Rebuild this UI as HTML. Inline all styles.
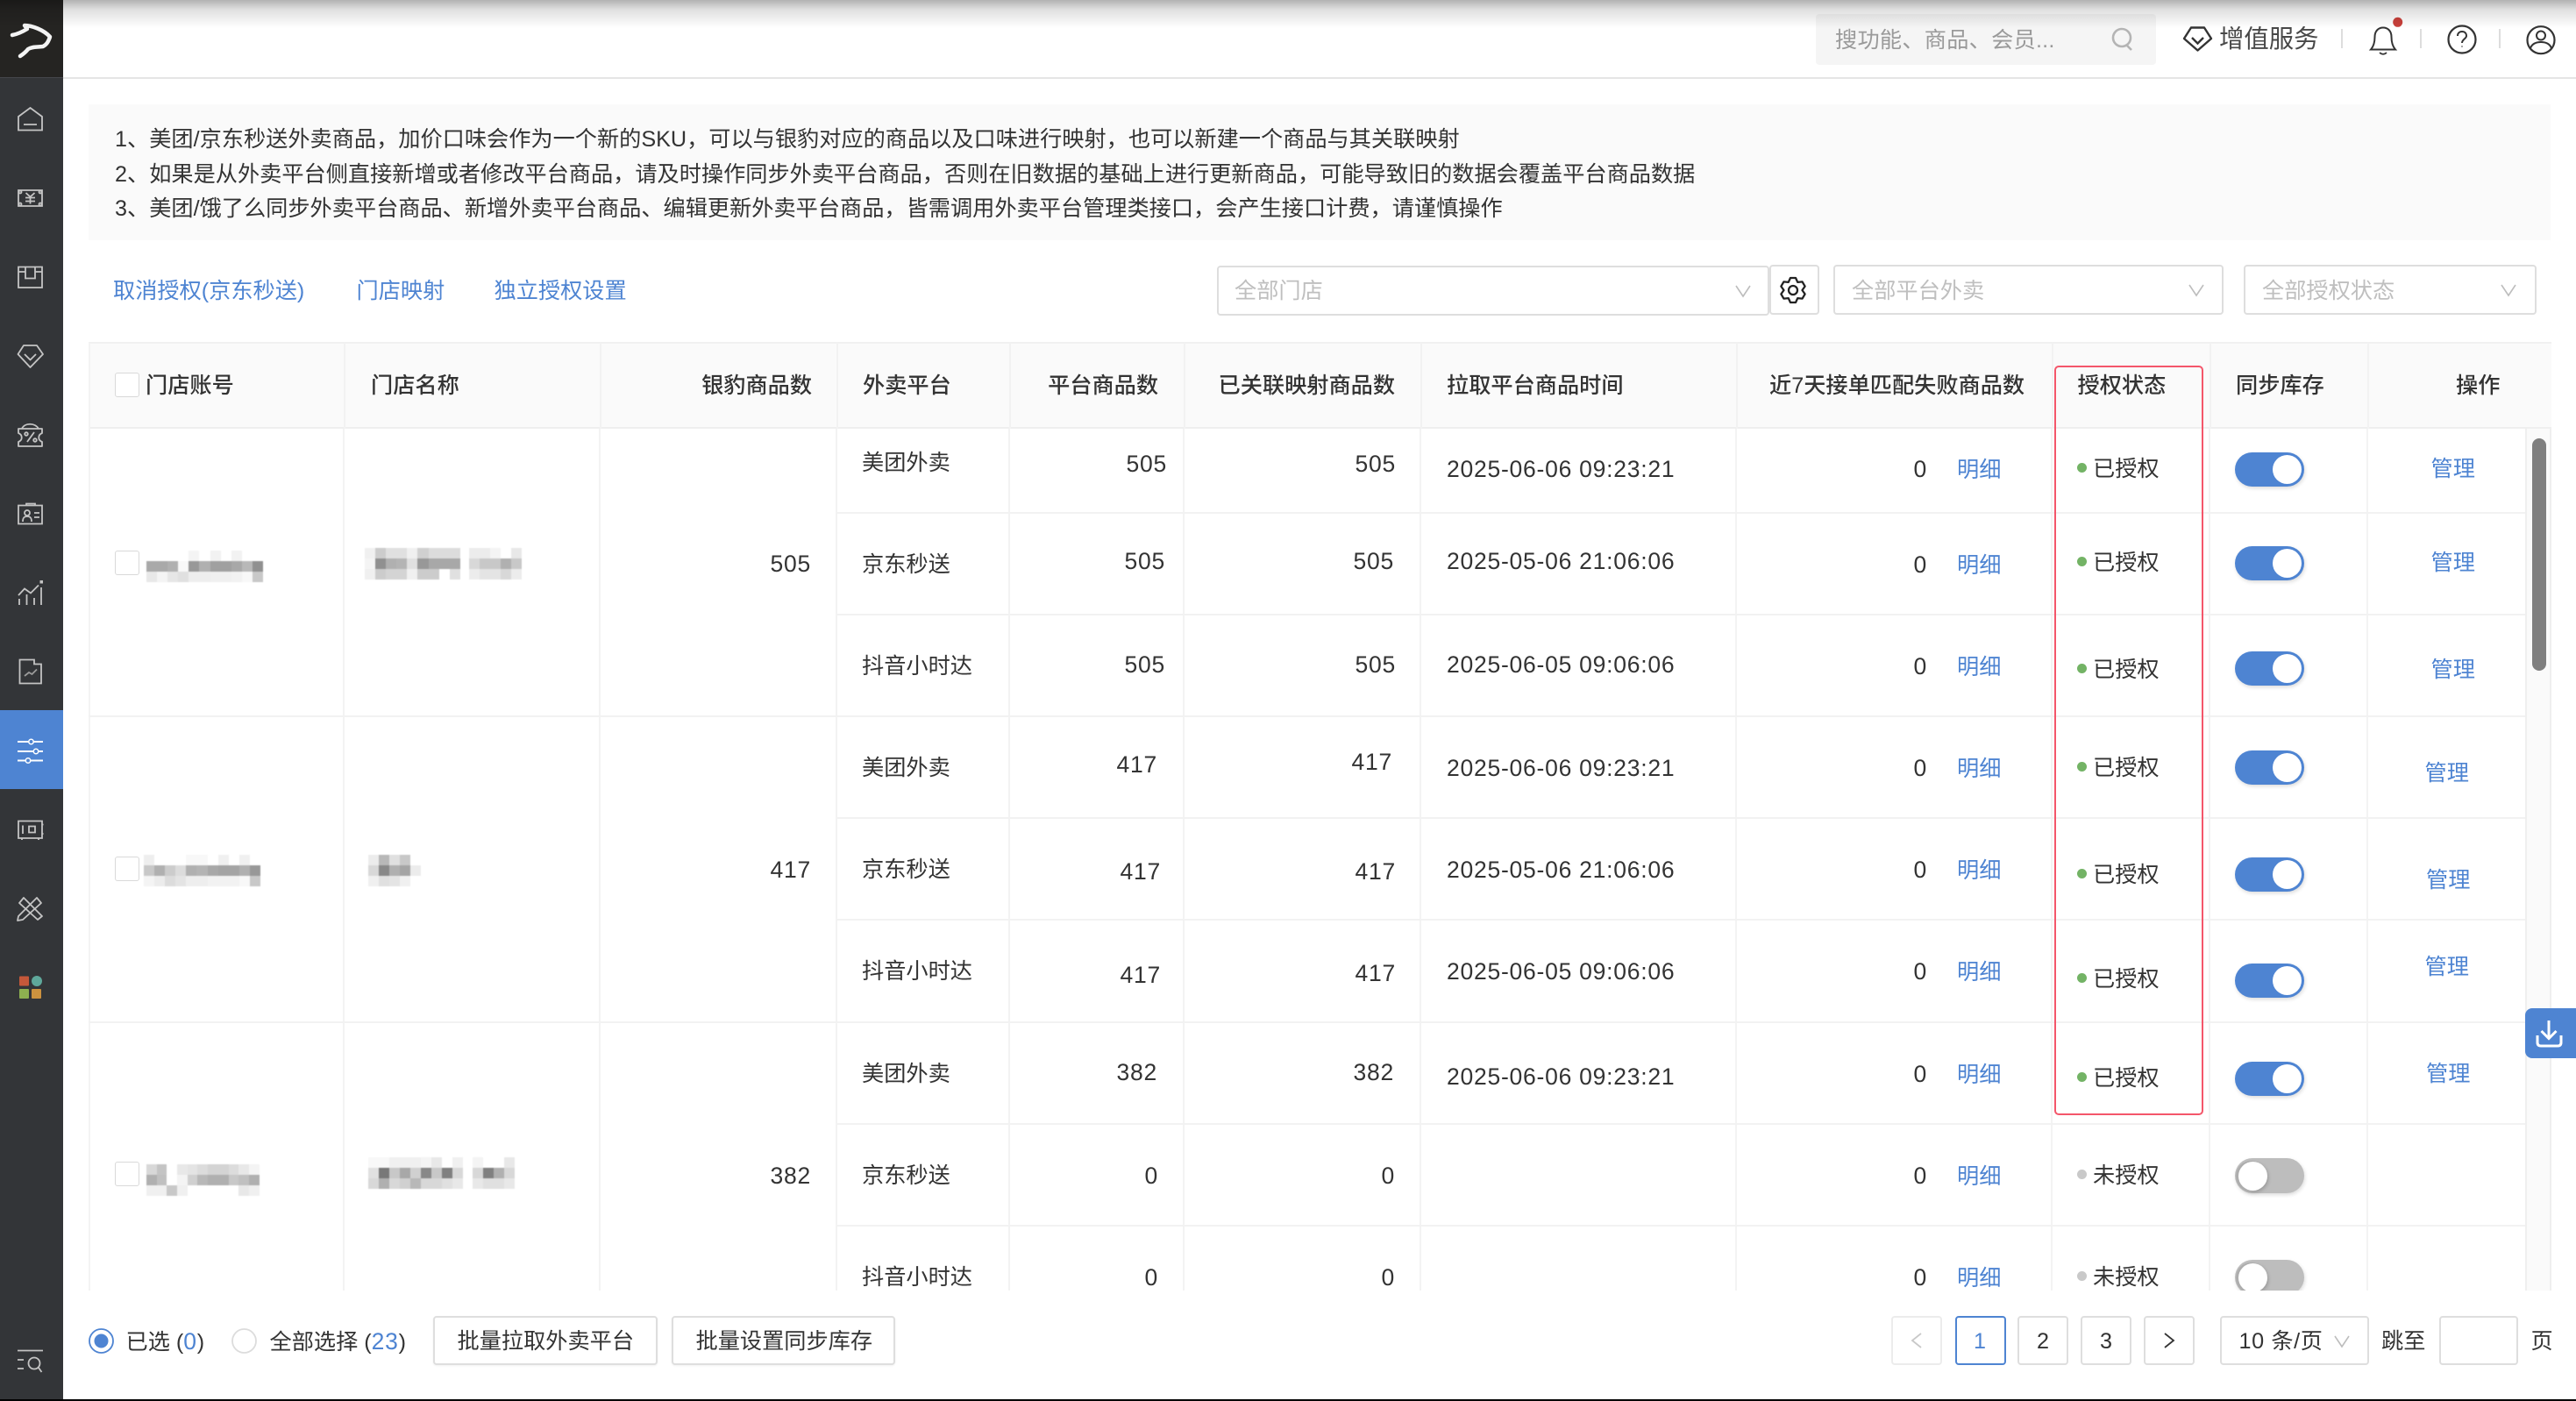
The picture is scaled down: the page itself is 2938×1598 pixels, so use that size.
<!DOCTYPE html>
<html lang="zh-CN"><head><meta charset="utf-8"><title>外卖平台</title>
<style>
html,body{margin:0;padding:0;width:2938px;height:1598px;overflow:hidden;background:#fff}
body{position:relative;font-family:"Liberation Sans","Noto Sans CJK SC",sans-serif;font-size:25.2px;color:#333}
.t{position:absolute;white-space:nowrap;line-height:40px;height:40px;margin-top:2px}
.b{color:#4e84d2}.n{letter-spacing:.75px;font-size:26.5px;margin-top:1px}.g{color:#bfbfbf}
span.n{margin:0}
.h{font-weight:500;color:#333}
.a{position:absolute;box-sizing:border-box}
.box{position:absolute;box-sizing:border-box;border:2px solid #dedede;border-radius:4px;background:#fff}
.ck{position:absolute;box-sizing:border-box;width:28px;height:28px;border:1.5px solid #d9d9d9;border-radius:3px;background:#fff}
.vl{position:absolute;top:489px;height:983px;width:2px;background:#f3f3f3}
.vh{position:absolute;top:391px;height:98px;width:2px;background:#f2f2f2}
.hl{position:absolute;height:2px;background:#f2f2f2;right:58px}
.tg{position:absolute;left:2549px;width:79px;height:39px;border-radius:20px;background:#4e84d2;box-shadow:1px 2px 4px rgba(0,0,0,.14)}
.tg:after{content:"";position:absolute;left:43px;top:3px;width:33px;height:33px;border-radius:50%;background:#fff}
.tg.off{background:#bdbdbd;height:40px}
.tg.off:after{left:4px;top:4px;box-shadow:-2px 0 0 1px #adadad,1px 2px 4px rgba(0,0,0,.2)}
.dot{position:absolute;left:2369px;width:11px;height:11px;border-radius:50%;background:#73b365}
.dot.o{background:#c9c9c9}
.mz{position:absolute;display:grid;grid-auto-rows:12px;filter:blur(.5px)}
.mz i{display:block}
svg{position:absolute;overflow:visible}
</style></head><body>

<!-- table region -->
<div class="a" style="left:0;top:0;width:2938px;height:1472px;overflow:hidden">
<div class="a" style="left:101px;top:390px;width:2809px;height:99px;background:#fafafa;border-top:2px solid #f1f1f1;border-bottom:2px solid #efefef"></div>
<div class="vl" style="left:101px;top:391px;height:1081px"></div>
<div class="vh" style="left:392px"></div><div class="vh" style="left:684px"></div><div class="vh" style="left:954px"></div><div class="vh" style="left:1151px"></div><div class="vh" style="left:1350px"></div><div class="vh" style="left:1620px"></div><div class="vh" style="left:1980px"></div><div class="vh" style="left:2340px"></div><div class="vh" style="left:2520px"></div><div class="vh" style="left:2700px"></div>
<div class="vl" style="left:391px"></div><div class="vl" style="left:683px"></div><div class="vl" style="left:953px"></div><div class="vl" style="left:1150px"></div><div class="vl" style="left:1349px"></div><div class="vl" style="left:1619px"></div><div class="vl" style="left:1979px"></div><div class="vl" style="left:2339px"></div><div class="vl" style="left:2519px"></div><div class="vl" style="left:2699px"></div>
<div class="hl" style="left:954px;top:584px"></div><div class="hl" style="left:954px;top:700px"></div><div class="hl" style="left:101px;top:816px"></div><div class="hl" style="left:954px;top:932px"></div><div class="hl" style="left:954px;top:1048px"></div><div class="hl" style="left:101px;top:1165px"></div><div class="hl" style="left:954px;top:1281px"></div><div class="hl" style="left:954px;top:1397px"></div>

<!-- header text -->
<div class="ck" style="left:131px;top:425px"></div>
<div class="t h" style="left:166px;top:418px">门店账号</div>
<div class="t h" style="left:423px;top:418px">门店名称</div>
<div class="t h" style="right:2012px;top:418px">银豹商品数</div>
<div class="t h" style="left:984px;top:418px">外卖平台</div>
<div class="t h" style="right:1617px;top:418px">平台商品数</div>
<div class="t h" style="right:1347px;top:418px">已关联映射商品数</div>
<div class="t h" style="left:1650px;top:418px">拉取平台商品时间</div>
<div class="t h" style="left:2018px;top:418px">近7天接单匹配失败商品数</div>
<div class="t h" style="left:2369.500px;top:418px">授权状态</div>
<div class="t h" style="left:2550px;top:418px">同步库存</div>
<div class="t h" style="left:2801px;top:418px">操作</div>

<!-- left cells -->
<div class="ck" style="left:131px;top:628px"></div>
<div class="ck" style="left:131px;top:977px"></div>
<div class="ck" style="left:131px;top:1325px"></div>
<div class="t n" style="right:2013px;top:622px">505</div>
<div class="t n" style="right:2013px;top:971px">417</div>
<div class="t n" style="right:2013px;top:1320px">382</div>

<!-- mosaics -->
<div class="mz" style="left:167px;top:628px;grid-template-columns:repeat(11,12.1px)"><i></i><i></i><i></i><i></i><i style=background:#f4f4f4></i><i></i><i style=background:#f2f2f2></i><i></i><i style=background:#f2f2f2></i><i></i><i></i><i style=background:#a9a9a9></i><i style=background:#a9a9a9></i><i style=background:#b0b0b0></i><i style=background:#f8f8f8></i><i style=background:#989898></i><i style=background:#b0b0b0></i><i style=background:#a0a0a0></i><i style=background:#a0a0a0></i><i style=background:#a8a8a8></i><i style=background:#b8b8b8></i><i style=background:#909090></i><i style=background:#e8e8e8></i><i style=background:#f4f4f4></i><i style=background:#e6e6e6></i><i style=background:#e0e0e0></i><i style=background:#eeeeee></i><i style=background:#eeeeee></i><i style=background:#f0f0f0></i><i style=background:#f0f0f0></i><i style=background:#f2f2f2></i><i style=background:#f8f8f8></i><i style=background:#c8c8c8></i></div>
<div class="mz" style="left:416px;top:625px;grid-template-columns:repeat(9,12.1px)"><i style=background:#f0f0f0></i><i style=background:#cccccc></i><i style=background:#e0e0e0></i><i style=background:#e0e0e0></i><i style=background:#f0f0f0></i><i style=background:#d0d0d0></i><i style=background:#dcdcdc></i><i style=background:#dcdcdc></i><i style=background:#dcdcdc></i><i style=background:#f4f4f4></i><i style=background:#909090></i><i style=background:#b0b0b0></i><i style=background:#b4b4b4></i><i style=background:#e0e0e0></i><i style=background:#989898></i><i style=background:#a8a8a8></i><i style=background:#a8a8a8></i><i style=background:#a8a8a8></i><i style=background:#f0f0f0></i><i style=background:#cccccc></i><i style=background:#d4d4d4></i><i style=background:#d4d4d4></i><i style=background:#f0f0f0></i><i style=background:#cccccc></i><i style=background:#cccccc></i><i></i><i style=background:#e0e0e0></i></div>
<div class="mz" style="left:535px;top:625px;grid-template-columns:repeat(5,12.1px)"><i style=background:#ececec></i><i style=background:#ececec></i><i style=background:#f4f4f4></i><i></i><i style=background:#e8e8e8></i><i style=background:#d8d8d8></i><i style=background:#c8c8c8></i><i style=background:#c8c8c8></i><i style=background:#b0b0b0></i><i style=background:#c8c8c8></i><i style=background:#ececec></i><i style=background:#e4e4e4></i><i style=background:#e4e4e4></i><i style=background:#d8d8d8></i><i style=background:#ececec></i></div>
<div class="mz" style="left:164px;top:975px;grid-template-columns:repeat(11,12.1px)"><i style=background:#eeeeee></i><i></i><i></i><i></i><i style=background:#f8f8f8></i><i style=background:#f8f8f8></i><i></i><i style=background:#f0f0f0></i><i></i><i style=background:#f0f0f0></i><i></i><i style=background:#c8c8c8></i><i style=background:#b0b0b0></i><i style=background:#cccccc></i><i style=background:#dcdcdc></i><i style=background:#b0b0b0></i><i style=background:#b4b4b4></i><i style=background:#a8a8a8></i><i style=background:#a4a4a4></i><i style=background:#a4a4a4></i><i style=background:#b0b0b0></i><i style=background:#989898></i><i style=background:#f4f4f4></i><i style=background:#ececec></i><i style=background:#dcdcdc></i><i style=background:#e4e4e4></i><i style=background:#eeeeee></i><i style=background:#eeeeee></i><i style=background:#f2f2f2></i><i style=background:#f2f2f2></i><i style=background:#f2f2f2></i><i style=background:#f8f8f8></i><i style=background:#c8c8c8></i></div>
<div class="mz" style="left:420px;top:975px;grid-template-columns:repeat(5,12px)"><i style=background:#ececec></i><i style=background:#b8b8b8></i><i style=background:#e0e0e0></i><i style=background:#c8c8c8></i><i></i><i style=background:#d8d8d8></i><i style=background:#888888></i><i style=background:#b0b0b0></i><i style=background:#a4a4a4></i><i style=background:#ececec></i><i style=background:#f0f0f0></i><i style=background:#e0e0e0></i><i style=background:#e4e4e4></i><i style=background:#f0f0f0></i><i></i></div>
<div class="mz" style="left:167px;top:1328px;grid-template-columns:repeat(11,11.7px)"><i style=background:#d8d8d8></i><i style=background:#c4c4c4></i><i></i><i style=background:#e8e8e8></i><i style=background:#e4e4e4></i><i style=background:#dcdcdc></i><i style=background:#d4d4d4></i><i style=background:#d4d4d4></i><i style=background:#dcdcdc></i><i style=background:#e8e8e8></i><i style=background:#f4f4f4></i><i style=background:#b0b0b0></i><i style=background:#c0c0c0></i><i></i><i style=background:#f4f4f4></i><i style=background:#d0d0d0></i><i style=background:#b8b8b8></i><i style=background:#b0b0b0></i><i style=background:#b0b0b0></i><i style=background:#c8c8c8></i><i style=background:#c0c0c0></i><i style=background:#b0b0b0></i><i style=background:#f0f0f0></i><i style=background:#f0f0f0></i><i style=background:#c8c8c8></i><i style=background:#f0f0f0></i><i></i><i></i><i></i><i></i><i></i><i style=background:#e8e8e8></i><i style=background:#f0f0f0></i></div>
<div class="mz" style="left:420px;top:1320px;grid-template-columns:repeat(9,12px)"><i style=background:#f8f8f8></i><i style=background:#f8f8f8></i><i style=background:#f0f0f0></i><i style=background:#f0f0f0></i><i style=background:#f0f0f0></i><i style=background:#f4f4f4></i><i style=background:#e8e8e8></i><i></i><i style=background:#f0f0f0></i><i style=background:#e0e0e0></i><i style=background:#787878></i><i style=background:#c8c8c8></i><i style=background:#a8a8a8></i><i style=background:#d0d0d0></i><i style=background:#888888></i><i style=background:#c8c8c8></i><i style=background:#808080></i><i style=background:#d8d8d8></i><i style=background:#d8d8d8></i><i style=background:#b0b0b0></i><i style=background:#d8d8d8></i><i style=background:#d0d0d0></i><i style=background:#b8b8b8></i><i style=background:#d8d8d8></i><i style=background:#d8d8d8></i><i style=background:#e0e0e0></i><i style=background:#e8e8e8></i></div>
<div class="mz" style="left:539px;top:1320px;grid-template-columns:repeat(4,12px)"><i style=background:#f4f4f4></i><i></i><i></i><i style=background:#e8e8e8></i><i style=background:#d8d8d8></i><i style=background:#808080></i><i style=background:#b0b0b0></i><i style=background:#d8d8d8></i><i style=background:#e8e8e8></i><i style=background:#e0e0e0></i><i style=background:#e0e0e0></i><i style=background:#e8e8e8></i></div>

<!-- platform -->
<div class="t" style="left:983px;top:506px">美团外卖</div>
<div class="t" style="left:983px;top:622px">京东秒送</div>
<div class="t" style="left:983px;top:738px">抖音小时达</div>
<div class="t" style="left:983px;top:854px">美团外卖</div>
<div class="t" style="left:983px;top:970px">京东秒送</div>
<div class="t" style="left:983px;top:1086px">抖音小时达</div>
<div class="t" style="left:983px;top:1203px">美团外卖</div>
<div class="t" style="left:983px;top:1319px">京东秒送</div>
<div class="t" style="left:983px;top:1435px">抖音小时达</div>

<!-- platform count -->
<div class="t n" style="right:1607px;top:508px">505</div>
<div class="t n" style="right:1609px;top:619px">505</div>
<div class="t n" style="right:1609px;top:737px">505</div>
<div class="t n" style="right:1618px;top:851px">417</div>
<div class="t n" style="right:1614px;top:973px">417</div>
<div class="t n" style="right:1614px;top:1091px">417</div>
<div class="t n" style="right:1618px;top:1202px">382</div>
<div class="t n" style="right:1617px;top:1320px">0</div>
<div class="t n" style="right:1617px;top:1436px">0</div>

<!-- linked count -->
<div class="t n" style="right:1346px;top:508px">505</div>
<div class="t n" style="right:1348px;top:619px">505</div>
<div class="t n" style="right:1346px;top:737px">505</div>
<div class="t n" style="right:1350px;top:848px">417</div>
<div class="t n" style="right:1346px;top:973px">417</div>
<div class="t n" style="right:1346px;top:1089px">417</div>
<div class="t n" style="right:1348px;top:1202px">382</div>
<div class="t n" style="right:1347px;top:1320px">0</div>
<div class="t n" style="right:1347px;top:1436px">0</div>

<!-- time -->
<div class="t n" style="left:1650px;top:514px">2025-06-06 09:23:21</div>
<div class="t n" style="left:1650px;top:619px">2025-05-06 21:06:06</div>
<div class="t n" style="left:1650px;top:737px">2025-06-05 09:06:06</div>
<div class="t n" style="left:1650px;top:855px">2025-06-06 09:23:21</div>
<div class="t n" style="left:1650px;top:971px">2025-05-06 21:06:06</div>
<div class="t n" style="left:1650px;top:1087px">2025-06-05 09:06:06</div>
<div class="t n" style="left:1650px;top:1207px">2025-06-06 09:23:21</div>

<!-- fail count + detail -->
<div class="t n" style="right:740px;top:514px">0</div><div class="t b" style="left:2232px;top:514px">明细</div>
<div class="t n" style="right:740px;top:623px">0</div><div class="t b" style="left:2232px;top:623px">明细</div>
<div class="t n" style="right:740px;top:739px">0</div><div class="t b" style="left:2232px;top:739px">明细</div>
<div class="t n" style="right:740px;top:855px">0</div><div class="t b" style="left:2232px;top:855px">明细</div>
<div class="t n" style="right:740px;top:971px">0</div><div class="t b" style="left:2232px;top:971px">明细</div>
<div class="t n" style="right:740px;top:1087px">0</div><div class="t b" style="left:2232px;top:1087px">明细</div>
<div class="t n" style="right:740px;top:1204px">0</div><div class="t b" style="left:2232px;top:1204px">明细</div>
<div class="t n" style="right:740px;top:1320px">0</div><div class="t b" style="left:2232px;top:1320px">明细</div>
<div class="t n" style="right:740px;top:1436px">0</div><div class="t b" style="left:2232px;top:1436px">明细</div>

<!-- status -->
<div class="dot" style="top:528px"></div><div class="t" style="left:2387px;top:513px">已授权</div>
<div class="dot" style="top:635px"></div><div class="t" style="left:2387px;top:620px">已授权</div>
<div class="dot" style="top:757px"></div><div class="t" style="left:2387px;top:742px">已授权</div>
<div class="dot" style="top:869px"></div><div class="t" style="left:2387px;top:854px">已授权</div>
<div class="dot" style="top:991px"></div><div class="t" style="left:2387px;top:976px">已授权</div>
<div class="dot" style="top:1110px"></div><div class="t" style="left:2387px;top:1095px">已授权</div>
<div class="dot" style="top:1223px"></div><div class="t" style="left:2387px;top:1208px">已授权</div>
<div class="dot o" style="top:1334px"></div><div class="t" style="left:2387px;top:1319px">未授权</div>
<div class="dot o" style="top:1450px"></div><div class="t" style="left:2387px;top:1435px">未授权</div>

<!-- toggles -->
<div class="tg" style="top:516px"></div>
<div class="tg" style="top:623px"></div>
<div class="tg" style="top:743px"></div>
<div class="tg" style="top:856px"></div>
<div class="tg" style="top:978px"></div>
<div class="tg" style="top:1099px"></div>
<div class="tg" style="top:1211px"></div>
<div class="tg off" style="top:1321px"></div>
<div class="tg off" style="top:1437px"></div>

<!-- manage -->
<div class="t b" style="left:2772.500px;top:513px">管理</div>
<div class="t b" style="left:2772.500px;top:620px">管理</div>
<div class="t b" style="left:2772.500px;top:742px">管理</div>
<div class="t b" style="left:2765.500px;top:860px">管理</div>
<div class="t b" style="left:2767px;top:982px">管理</div>
<div class="t b" style="left:2765.500px;top:1081px">管理</div>
<div class="t b" style="left:2767px;top:1203px">管理</div>

<!-- scrollbar -->
<div class="a" style="left:2880px;top:489px;width:30px;height:983px;background:#fafafa;border-left:2px solid #efefef;border-right:2px solid #efefef"></div>
<div class="a" style="left:2888px;top:500px;width:16px;height:265px;border-radius:8px;background:#7f7f7f"></div>
</div>

<!-- red box -->
<div class="a" style="left:2343px;top:417px;width:170px;height:855px;border:2.5px solid #f4566a;border-radius:5px"></div>

<!-- header -->
<div class="a" style="left:72px;top:88px;width:2866px;height:2px;background:#e5e5e5"></div>
<div class="a" style="left:2071px;top:16px;width:388px;height:58px;background:#f5f5f5;border-radius:4px"></div>
<div class="t" style="left:2093px;top:24px;color:#9a9a9a;letter-spacing:.25px">搜功能、商品、会员...</div>
<div class="t" style="left:2531px;top:23px;color:#484848;font-size:28.400px">增值服务</div>
<div class="a" style="left:2670px;top:33px;width:2px;height:22px;background:#ddd"></div>
<div class="a" style="left:2760px;top:33px;width:2px;height:22px;background:#ddd"></div>
<div class="a" style="left:2850px;top:33px;width:2px;height:22px;background:#ddd"></div>
<svg style="left:0;top:0" width="2938" height="90" viewBox="0 0 2938 90" fill="none">
<circle cx="2420" cy="43" r="10" stroke="#b4b4b4" stroke-width="2.6"/><path d="M2426 52l5 5" stroke="#b4b4b4" stroke-width="2.6"/>
<path d="M2499 31.5h15l8 12.5-15.500 13.500L2491 44z" stroke="#333" stroke-width="2.4" stroke-linejoin="round"/>
<path d="M2500 43l6.500 6.500 6.500-6.500" stroke="#333" stroke-width="2.4"/>
<path d="M2704 56.500C2708 52 2708.500 46 2708.500 42 2708.500 35 2713 31.500 2718 31.500S2727.500 35 2727.500 42C2727.500 46 2728 52 2732 56.500Z" stroke="#333" stroke-width="2"/>
<path d="M2714 60q4 3.500 8 0" stroke="#333" stroke-width="1.800"/>
<circle cx="2734.700" cy="25.300" r="5.500" fill="#c9403a"/>
<circle cx="2808" cy="45" r="15.500" stroke="#333" stroke-width="2.200"/>
<path d="M2803 41C2803 37 2806 36 2808 36 2811 36 2813 38 2813 41 2813 44 2808 45 2808 49" stroke="#333" stroke-width="2"/>
<circle cx="2808" cy="53" r="1" fill="#888"/>
<circle cx="2898" cy="45.700" r="15.500" stroke="#333" stroke-width="2.200"/>
<circle cx="2898" cy="40.500" r="5" stroke="#333" stroke-width="2"/>
<path d="M2886 55C2888 49.500 2893 48 2898 48S2908 49.500 2910 55" stroke="#333" stroke-width="2"/>
</svg>

<!-- notice -->
<div class="a" style="left:101px;top:119px;width:2808px;height:155px;background:#fafafa"></div>
<div class="t" style="left:131px;top:137px">1、美团/京东秒送外卖商品，加价口味会作为一个新的SKU，可以与银豹对应的商品以及口味进行映射，也可以新建一个商品与其关联映射</div>
<div class="t" style="left:131px;top:177px">2、如果是从外卖平台侧直接新增或者修改平台商品，请及时操作同步外卖平台商品，否则在旧数据的基础上进行更新商品，可能导致旧的数据会覆盖平台商品数据</div>
<div class="t" style="left:131px;top:216px">3、美团/饿了么同步外卖平台商品、新增外卖平台商品、编辑更新外卖平台商品，皆需调用外卖平台管理类接口，会产生接口计费，请谨慎操作</div>

<!-- toolbar -->
<div class="t b" style="left:129px;top:310px">取消授权(京东秒送)</div>
<div class="t b" style="left:406.500px;top:310px">门店映射</div>
<div class="t b" style="left:563.500px;top:310px">独立授权设置</div>
<div class="box" style="left:1388px;top:303px;width:630px;height:57px"></div>
<div class="t g" style="left:1408px;top:310px">全部门店</div>
<div class="box" style="left:2018px;top:302px;width:57px;height:57px"></div>
<div class="box" style="left:2091px;top:302px;width:445px;height:57px"></div>
<div class="t g" style="left:2112px;top:310px">全部平台外卖</div>
<div class="box" style="left:2559px;top:302px;width:334px;height:57px"></div>
<div class="t g" style="left:2580px;top:310px">全部授权状态</div>
<svg style="left:0;top:0" width="2938" height="400" viewBox="0 0 2938 400" fill="none">
<path d="M1980 326l8 12 8-12M2497 325l8 12 8-12M2853 325l8 12 8-12" stroke="#bdbdbd" stroke-width="1.600"/>
<g transform="translate(2045 331)" stroke="#222" stroke-width="2.300" stroke-linejoin="round"><path d="M-3-14H3L5.250-9.100 10.600-9.600 13.600-4.400 10.500 0 13.600 4.400 10.600 9.600 5.250 9.100 3 14H-3L-5.250 9.100-10.600 9.600-13.600 4.400-10.500 0-13.600-4.400-10.600-9.600-5.250-9.100Z"/><circle r="5"/></g>
</svg>

<!-- footer -->
<svg style="left:0;top:1490px" width="600" height="80" viewBox="0 1490 600 80" fill="none">
<circle cx="115.500" cy="1529.500" r="13.500" stroke="#4e84d2" stroke-width="1.800"/><circle cx="115.500" cy="1529.500" r="8" fill="#4e84d2"/>
<circle cx="278.500" cy="1529.500" r="13.500" stroke="#dcdcdc" stroke-width="1.800"/>
</svg>
<div class="t" style="left:143.500px;top:1508px">已选 (<span class="b n">0</span>)</div>
<div class="t" style="left:307.500px;top:1508px">全部选择 (<span class="b n">23</span>)</div>
<div class="box" style="left:494px;top:1501px;width:256px;height:56px;box-shadow:0 1px 2px rgba(0,0,0,.06)"></div>
<div class="t" style="left:521.500px;top:1508px">批量拉取外卖平台</div>
<div class="box" style="left:766px;top:1501px;width:255px;height:56px;box-shadow:0 1px 2px rgba(0,0,0,.06)"></div>
<div class="t" style="left:793.500px;top:1508px">批量设置同步库存</div>

<div class="box" style="left:2157px;top:1501px;width:58px;height:56px;border-color:#ececec"></div>
<div class="box" style="left:2230px;top:1501px;width:58px;height:56px;border-color:#4e84d2"></div>
<div class="t b" style="left:2229px;width:58px;text-align:center;top:1508px">1</div>
<div class="box" style="left:2301px;top:1501px;width:58px;height:56px"></div>
<div class="t" style="left:2301px;width:58px;text-align:center;top:1508px">2</div>
<div class="box" style="left:2373px;top:1501px;width:58px;height:56px"></div>
<div class="t" style="left:2373px;width:58px;text-align:center;top:1508px">3</div>
<div class="box" style="left:2445px;top:1501px;width:58px;height:56px"></div>
<div class="box" style="left:2532px;top:1501px;width:170px;height:56px"></div>
<div class="t" style="left:2553.500px;top:1508px;letter-spacing:.6px">10 条/页</div>
<div class="t" style="left:2716px;top:1508px">跳至</div>
<div class="box" style="left:2782px;top:1501px;width:90px;height:56px"></div>
<div class="t" style="left:2886.500px;top:1508px">页</div>
<svg style="left:0;top:1490px" width="2938" height="80" viewBox="0 1490 2938 80" fill="none">
<path d="M2191 1521l-10 8 10 8" stroke="#c8c8c8" stroke-width="1.800"/>
<path d="M2469 1521l10 8-10 8" stroke="#333" stroke-width="1.800"/>
<path d="M2663 1524l8 12 8-12" stroke="#bdbdbd" stroke-width="1.600"/>
</svg>

<!-- download -->
<div class="a" style="left:2880px;top:1150px;width:58px;height:57px;background:#4e84d2;border-radius:8px 0 0 8px"></div>
<svg style="left:2879px;top:1150px" width="57" height="57" viewBox="2881 1150 57 57" fill="none" stroke="#fff" stroke-width="3">
<path d="M2909 1164v20M2900.500 1176l8.500 8.500 8.500-8.500M2896 1181v8q0 4 4 4h19q4 0 4-4v-8"/>
</svg>

<!-- sidebar -->
<div class="a" style="left:0;top:0;width:72px;height:1596px;background:#333538"></div>
<div class="a" style="left:0;top:0;width:72px;height:89px;background:#252422;border-bottom:1px solid #45474b"></div>
<div class="a" style="left:0;top:810px;width:72px;height:90px;background:#4e84d2"></div>
<svg style="left:0;top:0" width="72" height="1596" viewBox="0 0 72 1596" fill="none" stroke="#c4c4c4" stroke-width="1.800">
<path d="M14 40C20 39 26 36 31 33L28 29C36 29 50 34 57 42 55 48 53 51 49 53 42 54 37 53 32 56 29 60 26 62 23 64" stroke="#f4f4f4" stroke-width="4.500" stroke-linecap="round" stroke-linejoin="round"/>
<path d="M21 217H48V235H21ZM29.500 220l5 4.500 5-4.500M34.500 224.500v8M29 225.500H40M29 229.500H40"/><circle cx="23" cy="219" r="1.500"/><circle cx="46" cy="219" r="1.500"/><circle cx="23" cy="233" r="1.500"/><circle cx="46" cy="233" r="1.500"/>
<path d="M21 148.500V133L34.500 123 48 133V148.500ZM27 142H42"/>
<path d="M21 304.500H48V328H21ZM21 310H29M40 310H48M29 304.500V317.500H40V304.500"/>
<path d="M27 394H42L49 404 34.500 419 20.500 404ZM28 404l6.500 6.500 6.500-6.500" stroke-linejoin="round"/>
<path d="M21 489H48V494C43 496 43 502 48 504V509H21V504C26 502 26 496 21 494ZM25 489C28 482 40 482 44 489M39 493L31 504" stroke-linejoin="round"/><circle cx="30" cy="495" r="1.800"/><circle cx="40" cy="502" r="1.800"/>
<path d="M21 576.500H48V597.500H21ZM30 576.500V574.500H40V576.500M26 595C26 590 28 589 31 589S36 590 36 595M39 585H45M39 590H45"/><circle cx="31" cy="585" r="3"/>
<path d="M21 679L28 671.500 35 676.500 44 667.500M22 683V690M30.500 678V690M39 682V690M47 670V690"/><rect x="45.500" y="662" width="3.500" height="3.500" fill="#c4c4c4" stroke="none"/>
<path d="M22.500 752.500H39V757.500H47V779.500H22.500Z"/><path d="M28 771L33 767 36.500 769 42 763.500" stroke="#9a9a9a"/>
<path d="M20 846H49M20 857H49M20 867.500H49" stroke="#fff" stroke-width="2"/><circle cx="35.500" cy="846" r="2.700" stroke="#fff" fill="#4e84d2" stroke-width="1.500"/><circle cx="41" cy="857" r="2.700" stroke="#fff" fill="#4e84d2" stroke-width="1.500"/><circle cx="32" cy="867.500" r="2.700" stroke="#fff" fill="#4e84d2" stroke-width="1.500"/>
<path d="M21 936.500H48V956H21ZM26 941.500V951M33 942.500H40V949.500H33ZM48 940.500H49.500M48 951H49.500M25 956V958M44 956V958"/>
<path d="M22 1030L27 1024 48 1045 43 1049ZM47 1030L42 1024 21 1045 20 1050 26 1049Z" stroke-linejoin="round"/>
<rect x="22" y="1113.500" width="11" height="11" rx="1" fill="#c4583a" stroke="none"/><circle cx="42" cy="1119" r="6" fill="#5fa89b" stroke="none"/><rect x="22" y="1128" width="11" height="11" rx="1" fill="#8db050" stroke="none"/><rect x="36" y="1128" width="11" height="11" rx="1" fill="#cc923f" stroke="none"/>
<path d="M20 1540.500H49M20 1551H27M20 1561H27M44 1560L47.500 1565"/><circle cx="39" cy="1555" r="6.500"/>
</svg>

<!-- bottom strip + top shade -->
<div class="a" style="left:0;top:1596px;width:2938px;height:2px;background:#000"></div>
<div class="a" style="left:0;top:0;width:2938px;height:32px;background:linear-gradient(to bottom,rgba(0,0,0,.3),rgba(0,0,0,.12) 35%,rgba(0,0,0,0))"></div>
</body></html>
